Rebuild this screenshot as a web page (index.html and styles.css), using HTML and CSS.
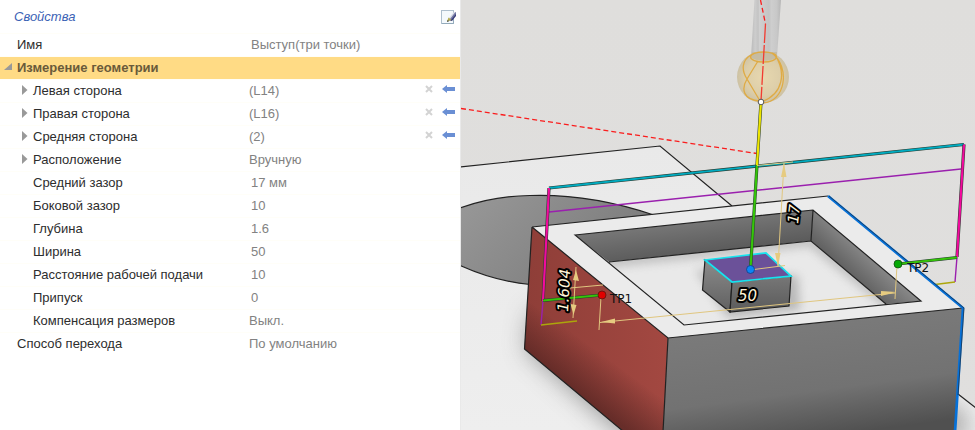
FILE: index.html
```html
<!DOCTYPE html>
<html lang="ru">
<head>
<meta charset="utf-8">
<title>Свойства</title>
<link rel="stylesheet" href="styles.css">
</head>
<body>
<main class="app">
  <form class="panel">
    <header class="panel-head">
      <h1 class="panel-title">Свойства</h1>
      <button class="icon-btn" type="button" aria-label="Редактировать">
        <svg width="16" height="16" viewBox="0 0 16 16">
          <rect x="1.5" y="1.5" width="12" height="13" fill="#f4f9fc" stroke="#aebfcd"/>
          <path d="M13.5 5v9.500H2" fill="none" stroke="#93aabb"/>
          <path d="M8.500 11l5.500-7 2-1v3l-5 6z" fill="#7379a4"/>
          <path d="M9 9l5-6 1 .5-5 6.500z" fill="#d9dbe8"/>
          <path d="M10.500 11.500l5.500-6.500v2l-4 5z" fill="#373b78"/>
          <path d="M7 12.500l1.500-4 3 2.500z" fill="#b3aa4c"/>
          <path d="M7 13l.7-2 1.300 1.200z" fill="#333"/>
        </svg>
      </button>
    </header>

    <div class="row">
      <label class="name" for="f-name">Имя</label>
      <input class="value inset" id="f-name" value="Выступ(три точки)">
    </div>
    <div class="row group">
      <button class="toggle" type="button" aria-label="Свернуть"><svg width="8" height="8" viewBox="0 0 8 8"><path d="M8 0v7H0z"/></svg></button>
      <h2 class="name">Измерение геометрии</h2>
    </div>
    <div class="row child">
      <button class="toggle" type="button" aria-label="Развернуть"><svg width="6" height="10" viewBox="0 0 6 10"><path d="M0 0l5.500 5L0 10z"/></svg></button>
      <label class="name" for="f-left">Левая сторона</label>
      <input class="value" id="f-left" value="(L14)">
      <button class="clear" type="button" aria-label="Очистить"><svg width="8" height="8" viewBox="0 0 8 8"><path d="M1 1l6 6M7 1L1 7"/></svg></button>
      <button class="pick" type="button" aria-label="Выбрать"><svg width="13" height="8" viewBox="0 0 13 8"><path d="M0 4l5-4v2h8v4H5v2z"/></svg></button>
    </div>
    <div class="row child">
      <button class="toggle" type="button" aria-label="Развернуть"><svg width="6" height="10" viewBox="0 0 6 10"><path d="M0 0l5.500 5L0 10z"/></svg></button>
      <label class="name" for="f-right">Правая сторона</label>
      <input class="value" id="f-right" value="(L16)">
      <button class="clear" type="button" aria-label="Очистить"><svg width="8" height="8" viewBox="0 0 8 8"><path d="M1 1l6 6M7 1L1 7"/></svg></button>
      <button class="pick" type="button" aria-label="Выбрать"><svg width="13" height="8" viewBox="0 0 13 8"><path d="M0 4l5-4v2h8v4H5v2z"/></svg></button>
    </div>
    <div class="row child">
      <button class="toggle" type="button" aria-label="Развернуть"><svg width="6" height="10" viewBox="0 0 6 10"><path d="M0 0l5.500 5L0 10z"/></svg></button>
      <label class="name" for="f-mid">Средняя сторона</label>
      <input class="value" id="f-mid" value="(2)">
      <button class="clear" type="button" aria-label="Очистить"><svg width="8" height="8" viewBox="0 0 8 8"><path d="M1 1l6 6M7 1L1 7"/></svg></button>
      <button class="pick" type="button" aria-label="Выбрать"><svg width="13" height="8" viewBox="0 0 13 8"><path d="M0 4l5-4v2h8v4H5v2z"/></svg></button>
    </div>
    <div class="row child">
      <button class="toggle" type="button" aria-label="Развернуть"><svg width="6" height="10" viewBox="0 0 6 10"><path d="M0 0l5.500 5L0 10z"/></svg></button>
      <label class="name" for="f-place">Расположение</label>
      <select class="value" id="f-place"><option>Вручную</option></select>
    </div>
    <div class="row child">
      <label class="name" for="f-midgap">Средний зазор</label>
      <input class="value inset" id="f-midgap" value="17 мм">
    </div>
    <div class="row child">
      <label class="name" for="f-sidegap">Боковой зазор</label>
      <input class="value inset" id="f-sidegap" value="10">
    </div>
    <div class="row child">
      <label class="name" for="f-depth">Глубина</label>
      <input class="value inset" id="f-depth" value="1.6">
    </div>
    <div class="row child">
      <label class="name" for="f-width">Ширина</label>
      <input class="value inset" id="f-width" value="50">
    </div>
    <div class="row child">
      <label class="name" for="f-feed">Расстояние рабочей подачи</label>
      <input class="value inset" id="f-feed" value="10">
    </div>
    <div class="row child">
      <label class="name" for="f-stock">Припуск</label>
      <input class="value inset" id="f-stock" value="0">
    </div>
    <div class="row child">
      <label class="name" for="f-comp">Компенсация размеров</label>
      <select class="value" id="f-comp"><option>Выкл.</option></select>
    </div>
    <div class="row">
      <label class="name" for="f-move">Способ перехода</label>
      <select class="value" id="f-move"><option>По умолчанию</option></select>
    </div>
  </form>

  <section class="viewport">
    <svg class="scene" viewBox="461 0 514 430" preserveAspectRatio="xMinYMin slice">
      <defs>
        <linearGradient id="bg" x1="0" y1="0" x2="0" y2="1"><stop offset="0" stop-color="#dfdedc"/><stop offset="1" stop-color="#e0dfde"/></linearGradient>
        <linearGradient id="plate" gradientUnits="userSpaceOnUse" x1="0" y1="146" x2="0" y2="430"><stop offset="0" stop-color="#e9e9e9"/><stop offset="1" stop-color="#eee"/></linearGradient>
        <linearGradient id="disc" x1="0" y1="0" x2="1" y2=".4"><stop offset="0" stop-color="#999"/><stop offset="1" stop-color="#767676"/></linearGradient>
        <linearGradient id="redlow" gradientUnits="userSpaceOnUse" x1="575" y1="391" x2="602" y2="354"><stop offset="0" stop-color="#3c1a18" stop-opacity=".55"/><stop offset="1" stop-color="#3c1a18" stop-opacity="0"/></linearGradient>
        <linearGradient id="redbase" x1="0" y1="0" x2="1" y2="0"><stop offset="0" stop-color="#8e3e38"/><stop offset="1" stop-color="#a34841"/></linearGradient>
        <linearGradient id="front" gradientUnits="userSpaceOnUse" x1="780" y1="325" x2="795" y2="440"><stop offset="0" stop-color="#7a7a7a"/><stop offset=".6" stop-color="#727272"/><stop offset="1" stop-color="#505050"/></linearGradient>
        <linearGradient id="wall" gradientUnits="userSpaceOnUse" x1="700" y1="220" x2="704" y2="254"><stop offset="0" stop-color="#777"/><stop offset="1" stop-color="#5a5a5a"/></linearGradient>
        <linearGradient id="wallr" gradientUnits="userSpaceOnUse" x1="873" y1="255" x2="850" y2="280"><stop offset="0" stop-color="#8b8b8b"/><stop offset="1" stop-color="#5c5c5c"/></linearGradient>
        <linearGradient id="pedl" x1="0" y1="0" x2="0" y2="1"><stop offset="0" stop-color="#8b8b8b"/><stop offset="1" stop-color="#606060"/></linearGradient>
        <linearGradient id="pedf" x1="0" y1="0" x2="0" y2="1"><stop offset="0" stop-color="#777"/><stop offset="1" stop-color="#5b5b5b"/></linearGradient>
        <linearGradient id="tube" x1="0" y1="0" x2="1" y2="0"><stop offset="0" stop-color="#b9b9b9"/><stop offset=".14" stop-color="#cdcdcd"/><stop offset=".24" stop-color="#c3c3c3"/><stop offset=".28" stop-color="#d0d0d0"/><stop offset=".6" stop-color="#c4c4c4"/><stop offset=".68" stop-color="#cecece"/><stop offset=".86" stop-color="#c8c8c8"/><stop offset="1" stop-color="#b6b6b6"/></linearGradient>
        <radialGradient id="ball"><stop offset="0" stop-color="#e8d7ab"/><stop offset=".7" stop-color="#dccca4"/><stop offset="1" stop-color="#cbbf9f"/></radialGradient>
        <filter id="soft" x="-30%" y="-30%" width="160%" height="160%"><feGaussianBlur stdDeviation="12"/></filter>
        <filter id="soft2" x="-30%" y="-30%" width="160%" height="160%"><feGaussianBlur stdDeviation="5"/></filter>
        <clipPath id="clipplate"><path d="M460 167L660 146 975 408V430H460z"/></clipPath>
        <clipPath id="clipfloor"><path d="M609 262L811 241 886 304 684 325z"/></clipPath>
      </defs>

      <!-- base plate and round boss -->
      <rect x="461" width="514" height="430" fill="url(#bg)"/>
      <path d="M460 167L660 146 980 412V430H460z" fill="url(#plate)"/>
      <g clip-path="url(#clipplate)">
        <path d="M532 310L526 350 624 436H970L960 410z" fill="#555" opacity=".55" filter="url(#soft)"/>
      </g>
      <path d="M455 210C480 200 505 196 530 195.500 575 194 618 203 653 214.700L700 260 600 290 530 284.500C505 282 480 275 455 263z" fill="url(#disc)"/>
      <path d="M455 210C480 200 505 196 530 195.500 575 194 618 203 653 214.700M530 284.500C505 282 480 275 455 263" class="edge"/>
      <path d="M460 167L660 146 732 206M958 394L976 408" class="edge"/>

      <!-- pocketed block -->
      <path d="M532 227L828 196 963 308 668 338z" fill="#ebebeb"/>
      <path d="M532 227L668 338 663 432H624L524.500 349z" fill="url(#redbase)"/>
      <path d="M524.500 349L624 432H663L664 400 527 300z" fill="url(#redlow)"/>
      <path d="M668 338L963 308 955 432H663z" fill="url(#front)"/>
      <path d="M575 235L813 210 811 241 609 262z" fill="url(#wall)"/>
      <path d="M813 210L921 301 886 304 811 241z" fill="url(#wallr)"/>
      <path d="M609 262L811 241 886 304 684 325z" fill="#e9e9e9"/>
      <g clip-path="url(#clipfloor)">
        <path d="M600 263L811 241 890 305" fill="none" stroke="#999" stroke-width="10" opacity=".55" filter="url(#soft2)"/>
        <path d="M696 270L728 318 800 310 798 276z" fill="#888" opacity=".5" filter="url(#soft2)"/>
      </g>
      <path d="M532 227L828 196M532 227L668 338 963 308M532 227L524.500 349 624 432M668 338L663 432M575 235L813 210 921 301 684 325zM609 262L811 241 886 304M813 210L811 241" class="edge"/>

      <!-- pedestal -->
      <path d="M705 260L732 282 730 312 702.500 290z" fill="url(#pedl)" class="edge-line"/>
      <path d="M732 282L791 276 789 306 730 312z" fill="url(#pedf)" class="edge-line"/>
      <path d="M705 260L766 253 791 276 732 282z" fill="#6b5199" stroke="#17e3ee" stroke-width="1.700"/>

      <!-- probe -->
      <path d="M754.500 0H781L777 57Q764 65 751 57z" fill="url(#tube)"/>
      <circle cx="763" cy="77" r="26" fill="url(#ball)" opacity=".92"/>
      <path d="M752 52H777V58Q764 64 751 58z" fill="#c2b9a2" opacity=".8"/>
      <g fill="none" stroke="#dfab45" stroke-width="1.300">
        <ellipse cx="763.500" cy="57" rx="13" ry="5"/>
        <path d="M751 55C742 60 741 70 747 79L760 101M758 61L747 79C741 89 743 100 760 101M775 55C786 72 784 94 761 102M772 53C791 68 785 102 763 103"/>
      </g>
      <path d="M760.500 0L765.500 24" class="travel"/>
      <path d="M765.500 24L761 101" fill="none" stroke="#f23b31" stroke-width="1.300" stroke-dasharray="19 2"/>
      <path d="M461 108.500L757 153.500" class="travel"/>

      <!-- measuring path -->
      <path d="M549 212L961 169M543 301L541 325M957 257L955 282" class="retract"/>
      <path d="M541 325L577 321M955 282L935 284.500" fill="none" stroke="#aca60b" stroke-width="1.300"/>
      <path d="M549 188L964 144.500" class="casing"/>
      <path d="M549 188L964 144.500" stroke="#00abc0" stroke-width="1.800"/>
      <path d="M549 188L543 301M964 144.500L957 257" class="casing"/>
      <path d="M549 188L543 301M964 144.500L957 257" stroke="#f20a9d" stroke-width="2.200"/>
      <path d="M828 196L963 308 955 432" fill="none" stroke="#0671d9" stroke-width="2.700"/>
      <path d="M829 196L964 308 958 395" fill="none" stroke="#222" stroke-width=".6"/>
      <path d="M543 300.500L602 295M957 257.500L898 264" class="casing"/>
      <path d="M543 300.500L602 295M957 257.500L898 264" stroke="#35c409" stroke-width="2"/>
      <path d="M761 102L757 165 750.500 269" class="casing"/>
      <path d="M761 102L757 165" stroke="#eee500" stroke-width="2.200"/>
      <path d="M757 165L750.500 269" stroke="#35c409" stroke-width="2.200"/>

      <!-- dimensions -->
      <path d="M784 163L778 266M750 270L785 265.500M757 165.500L793 162M601 297L599 330M897 265L895 299M600 322.500L895 293M576 267L573 318M570 288L603 285" class="dim"/>
      <path d="M784 163L786.500 177H781zM778 267L780.500 253H775zM601 322L615 318.500V323.500zM896 292L881 291V296zM576 270L579 281 573 280zM573.500 315L570.500 304 576.500 305z" fill="#e6cb80"/>
      <circle cx="602" cy="295" r="4" fill="#e00000" stroke="#5d1410" stroke-width=".8"/>
      <circle cx="898" cy="264" r="4" fill="#05a905" stroke="#124d12" stroke-width=".8"/>
      <circle cx="750.500" cy="269.500" r="4" fill="#0b84f5" stroke="#173e82" stroke-width=".8"/>
      <circle cx="761" cy="102" r="2.800" fill="#fff" stroke="#555"/>
      <text x="610" y="303" class="point">TP1</text>
      <text x="907" y="272" class="point">TP2</text>
      <text x="738" y="301" class="size">50</text>
      <text transform="translate(568 312) rotate(-87)" class="size">1.604</text>
      <text transform="translate(798 224) rotate(-84)" class="size">17</text>
    </svg>
  </section>
</main>
</body>
</html>
```

FILE: styles.css
```css
* { box-sizing: border-box; }

body {
  margin: 0;
  background: #fff;
  color: #2d2d2d;
  font: 13px/22px "Liberation Sans", Arial, sans-serif;
}

.app {
  display: grid;
  grid-template-columns: minmax(0, 460fr) minmax(0, 515fr);
  min-height: 100vh;
}

.panel-head {
  display: flex;
  align-items: center;
  justify-content: space-between;
  height: 33px;
  padding: 0 4px 0 14px;
}

.panel-title {
  margin: 0;
  color: #3b62b5;
  font-size: 13px;
  font-style: italic;
  font-weight: 400;
}

button {
  display: flex;
  align-items: center;
  justify-content: center;
  padding: 0;
  border: 0;
  background: none;
}

.row {
  display: grid;
  grid-template-columns: 17px 232px minmax(0, 1fr) 16px 23px;
  align-items: center;
  height: 23px;
  border-top: 1px solid #fffef8;
}

.row.child { grid-template-columns: 33px 216px minmax(0, 1fr) 16px 23px; }

.name {
  grid-column: 2;
  grid-row: 1;
  margin: 0;
  font-size: 13px;
  font-weight: 400;
  white-space: nowrap;
}

.group { background: #ffdb85; }
.group .name { color: #695a3a; font-weight: 700; }

.toggle {
  grid-column: 1;
  grid-row: 1;
  justify-content: flex-end;
  padding: 0 5px 2px 0;
  fill: #999;
}

.value {
  grid-column: 3;
  grid-row: 1;
  width: 100%;
  height: 22px;
  padding: 0;
  border: 0;
  outline: 0;
  background: none;
  color: #828282;
  font: inherit;
  appearance: none;
}

.inset { padding-left: 2px; }

.clear, .pick { padding-bottom: 4px; }
.clear { grid-column: 4; fill: none; stroke: #d3d3d3; stroke-width: 2; }
.pick { grid-column: 5; fill: #6a8fd4; }

.viewport {
  position: relative;
  min-width: 0;
  overflow: hidden;
  border-left: 1px solid #e9e9e9;
}

.scene {
  position: absolute;
  width: 100%;
  height: 100%;
}

.edge { fill: none; stroke: #222; stroke-width: 1.2; }
.edge-line { stroke: #222; stroke-width: 1.2; }
.travel { fill: none; stroke: #fa1d1d; stroke-width: 1.3; stroke-dasharray: 5 3; }
.retract { fill: none; stroke: #9a20ae; stroke-width: 1.4; }
.casing { fill: none; stroke: #263b30; stroke-width: 3.2; }
.dim { fill: none; stroke: #e0c67f; stroke-width: 1; }

.point { fill: #111; font: 12px "DejaVu Sans", sans-serif; }

.size {
  fill: #fff5da;
  stroke: #000;
  stroke-width: 4;
  stroke-linejoin: round;
  paint-order: stroke;
  font: italic 400 15px "DejaVu Sans", sans-serif;
}
```
